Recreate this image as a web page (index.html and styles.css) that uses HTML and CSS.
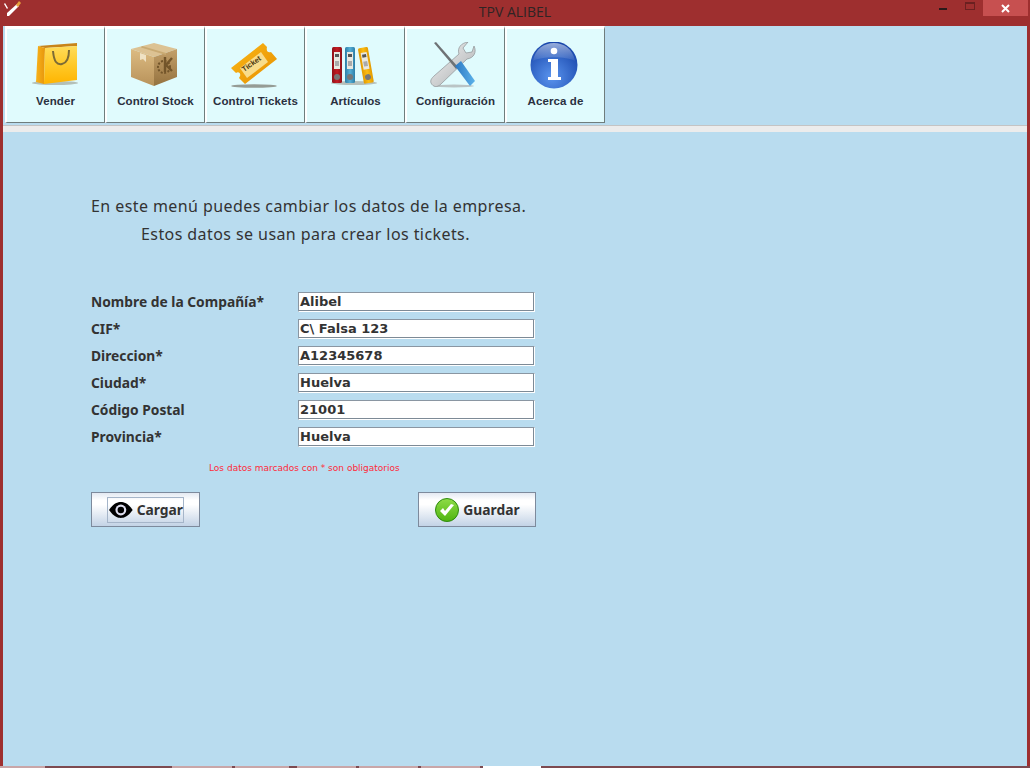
FILE: index.html
```html
<!DOCTYPE html>
<html lang="es">
<head>
<meta charset="utf-8">
<title>TPV ALIBEL</title>
<link rel="stylesheet" href="styles.css">
</head>
<body>
<div class="window">
  <header class="titlebar">
    <svg class="app-icon" width="18" height="18" viewBox="0 0 18 18">
      <path d="M2 3 L5 8 L4 9 L1 4 Z" fill="#fff"/>
      <path d="M4 13 L14 4 L16 6 L6 16 L4 16 Z" fill="#fff"/>
      <path d="M13 5 L16 1 L18 3 L15 7 Z" fill="#e8a33c"/>
    </svg>
    <div class="title">TPV ALIBEL</div>
    <div class="controls">
      <span class="ctl-min"></span>
      <span class="ctl-max"></span>
      <span class="ctl-close">
        <svg width="9" height="9" viewBox="0 0 9 9"><path d="M1 1 L8 8 M8 1 L1 8" stroke="#fff" stroke-width="2"/></svg>
      </span>
    </div>
  </header>
  <main class="frame">
    <nav class="toolbar">
      <button class="tool">
        <svg class="tool-icon" width="48" height="48" viewBox="0 0 48 48">
          <defs>
            <linearGradient id="bagF" x1="0" y1="0" x2="0" y2="1"><stop offset="0" stop-color="#ffdc5a"/><stop offset=".5" stop-color="#ffc928"/><stop offset="1" stop-color="#ffb400"/></linearGradient>
            <linearGradient id="bagS" x1="0" y1="0" x2="1" y2="0"><stop offset="0" stop-color="#f7b21a"/><stop offset="1" stop-color="#e8960c"/></linearGradient>
          </defs>
          <ellipse cx="25" cy="41" rx="23" ry="2" fill="#8f8f80" opacity=".55"/>
          <path d="M8 4 L47 1 L47 4 L15 6 Z" fill="#c8841a"/>
          <path d="M8 4 L15 6 L14 42 L6 40 Z" fill="url(#bagS)"/>
          <path d="M15 6 L47 4 L47 38 L14 42 Z" fill="url(#bagF)"/>
          <path d="M23 9 C24 20 27 23 32 22 C37 21 39 15 39 8" fill="none" stroke="#7d6b35" stroke-width="2"/>
        </svg>
        <span class="tool-label">Vender</span>
      </button>
      <button class="tool">
        <svg class="tool-icon" width="48" height="48" viewBox="0 0 48 48">
          <defs>
            <linearGradient id="boxL" x1="0" y1="0" x2="0" y2="1"><stop offset="0" stop-color="#dcbb82"/><stop offset="1" stop-color="#b8925a"/></linearGradient>
            <linearGradient id="boxR" x1="0" y1="0" x2="0" y2="1"><stop offset="0" stop-color="#c3a06a"/><stop offset="1" stop-color="#95723f"/></linearGradient>
          </defs>
          <path d="M1 7 L24 1 L47 7 L24 15 Z" fill="#dcc293"/>
          <path d="M1 7 L24 15 L24 44 L1 35 Z" fill="url(#boxL)"/>
          <path d="M24 15 L47 7 L47 35 L24 44 Z" fill="url(#boxR)"/>
          <path d="M12 4 L36 11 L36 13 L11 5.500 Z" fill="#c9aa73"/>
          <path d="M10 11 L16 13 L16 20 L13 17 L10 18 Z" fill="#efe2c4"/>
          <circle cx="34" cy="25" r="6" fill="none" stroke="#73552a" stroke-width="2" stroke-dasharray="2 1.5"/>
          <path d="M35 15 L35 30 M42 16 L36 23 L42 29" fill="none" stroke="#73552a" stroke-width="2.400"/>
        </svg>
        <span class="tool-label">Control Stock</span>
      </button>
      <button class="tool">
        <svg class="tool-icon" width="48" height="48" viewBox="0 0 48 48">
          <defs>
            <linearGradient id="tick" x1="0" y1="0" x2="1" y2="1"><stop offset="0" stop-color="#fbb918"/><stop offset="1" stop-color="#e68e00"/></linearGradient>
          </defs>
          <ellipse cx="24" cy="44" rx="23" ry="1.800" fill="#7c7c72" opacity=".75"/>
          <path d="M1 26 L33 1 L37 5 C36 9 38 11 41 10 L47 17 L15 42 L9 36 C12 32 9 29 6 31 Z" fill="url(#tick)"/>
          <path d="M10 26 L31 10 L38 20 L17 36 Z" fill="#f8dc8a"/>
          <text class="ticket-text" x="0" y="0" transform="translate(14 30) rotate(-35)">Ticket</text>
        </svg>
        <span class="tool-label">Control Tickets</span>
      </button>
      <button class="tool">
        <svg class="tool-icon" width="48" height="48" viewBox="0 0 48 48">
          <defs>
            <linearGradient id="b1" x1="0" y1="0" x2="1" y2="0"><stop offset="0" stop-color="#8f1118"/><stop offset=".5" stop-color="#c21c24"/><stop offset="1" stop-color="#8f1118"/></linearGradient>
            <linearGradient id="b2" x1="0" y1="0" x2="1" y2="0"><stop offset="0" stop-color="#2d7ea6"/><stop offset=".5" stop-color="#55aed6"/><stop offset="1" stop-color="#2d7ea6"/></linearGradient>
            <linearGradient id="b3" x1="0" y1="0" x2="1" y2="0"><stop offset="0" stop-color="#e39a00"/><stop offset=".5" stop-color="#fbbc12"/><stop offset="1" stop-color="#e39a00"/></linearGradient>
          </defs>
          <ellipse cx="24" cy="41" rx="23" ry="2" fill="#9a9a90" opacity=".6"/>
          <rect x="2" y="5" width="10" height="36" rx="1.500" fill="url(#b1)"/>
          <rect x="15" y="5" width="10" height="36" rx="1.500" fill="url(#b2)"/>
          <g transform="rotate(-10 39 41)"><rect x="34" y="5" width="10" height="36" rx="1.500" fill="url(#b3)"/>
            <rect x="36" y="10" width="6" height="17" fill="#e8e8e0"/><rect x="37" y="12" width="4" height="3" fill="#555"/><rect x="37" y="19" width="4" height="5" fill="#aaa"/><circle cx="39" cy="35" r="3" fill="#777"/></g>
          <rect x="4" y="10" width="6" height="17" fill="#e8e8e0"/><rect x="5" y="12" width="4" height="3" fill="#555"/><rect x="5" y="19" width="4" height="5" fill="#aaa"/><circle cx="7" cy="35" r="3" fill="#777"/>
          <rect x="17" y="10" width="6" height="17" fill="#e8e8e0"/><rect x="18" y="12" width="4" height="3" fill="#555"/><rect x="18" y="19" width="4" height="5" fill="#aaa"/><circle cx="20" cy="35" r="3" fill="#777"/>
        </svg>
        <span class="tool-label">Artículos</span>
      </button>
      <button class="tool">
        <svg class="tool-icon" width="48" height="48" viewBox="0 0 48 48">
          <defs>
            <linearGradient id="steel" x1="0" y1="0" x2="1" y2="1"><stop offset="0" stop-color="#f6f6f6"/><stop offset="1" stop-color="#a9acae"/></linearGradient>
            <linearGradient id="blue" x1="0" y1="0" x2="1" y2="0"><stop offset="0" stop-color="#2b78c2"/><stop offset="1" stop-color="#5cb2ea"/></linearGradient>
          </defs>
          <ellipse cx="24" cy="44" rx="20" ry="1.500" fill="#a0a0a0" opacity=".6"/>
          <path d="M1 41 C0 38 2 36 4 34 L29 12 C27 6 31 1 38 0 L33 6 L36 11 L42 10 L44 4 C47 10 44 16 37 17 L11 42 C7 46 3 45 1 41 Z" fill="url(#steel)" stroke="#8d9194" stroke-width=".7"/>
          <path d="M4 1 L6 0 L28 25 L26 27 Z" fill="#6e7275"/>
          <path d="M25 24 L31 19 L45 39 L40 44 Z" fill="url(#blue)"/>
        </svg>
        <span class="tool-label">Configuración</span>
      </button>
      <button class="tool">
        <svg class="tool-icon" width="48" height="48" viewBox="0 0 48 48">
          <defs>
            <radialGradient id="info" cx=".45" cy=".75" r=".8"><stop offset="0" stop-color="#5a94ee"/><stop offset="1" stop-color="#123fa5"/></radialGradient>
            <linearGradient id="gloss" x1="0" y1="0" x2="0" y2="1"><stop offset="0" stop-color="#fff" stop-opacity=".55"/><stop offset="1" stop-color="#fff" stop-opacity=".05"/></linearGradient>
          </defs>
          <circle cx="24" cy="23" r="23.500" fill="url(#info)"/>
          <path d="M3 19 C5 7 14 1 24 1 C34 1 43 7 45 19 C36 14 12 14 3 19 Z" fill="url(#gloss)"/>
          <circle cx="24" cy="9" r="3.300" fill="#fff"/>
          <path d="M18 17 L28 17 L28 35 L31 35 L31 38 L18 38 L18 35 L21 35 L21 20 L18 20 Z" fill="#fff"/>
        </svg>
        <span class="tool-label">Acerca de</span>
      </button>
    </nav>
    <div class="divider"></div>
    <section class="content">
      <div class="intro">
        <p class="intro-line">En este menú puedes cambiar los datos de la empresa.</p>
        <p class="intro-line intro-second">Estos datos se usan para crear los tickets.</p>
      </div>
      <form class="form">
        <label class="field-label">Nombre de la Compañía*</label><div class="field">Alibel</div>
        <label class="field-label">CIF*</label><div class="field">C\ Falsa 123</div>
        <label class="field-label">Direccion*</label><div class="field">A12345678</div>
        <label class="field-label">Ciudad*</label><div class="field">Huelva</div>
        <label class="field-label">Código Postal</label><div class="field">21001</div>
        <label class="field-label">Provincia*</label><div class="field">Huelva</div>
      </form>
      <p class="note">Los datos marcados con * son obligatorios</p>
      <div class="actions">
        <button class="action">
          <span class="focus">
            <svg width="24" height="16" viewBox="0 0 24 16">
              <path d="M0 8 C5 1 9 0 12 0 C15 0 19 1 24 8 C19 15 15 16 12 16 C9 16 5 15 0 8 Z" fill="#000"/>
              <circle cx="12" cy="8" r="5.500" fill="#dde"/>
              <circle cx="12" cy="8" r="3.300" fill="#000"/>
            </svg>
            Cargar
          </span>
        </button>
        <button class="action action-save">
          <svg width="24" height="24" viewBox="0 0 24 24">
            <defs><linearGradient id="ok" x1="0" y1="0" x2="0" y2="1"><stop offset="0" stop-color="#8fdc48"/><stop offset="1" stop-color="#4fb40f"/></linearGradient></defs>
            <circle cx="12" cy="12" r="11.500" fill="url(#ok)" stroke="#2f8a10"/>
            <path d="M5 13 L10 18 L19 7 L16 6 L10 13 L8 10 Z" fill="#fff"/>
          </svg>
          Guardar
        </button>
      </div>
    </section>
  </main>
  <footer class="taskstrip">
    <span class="seg s1"></span><span class="seg s2"></span><span class="seg s3"></span><span class="seg s4"></span><span class="seg s5"></span><span class="seg s6"></span><span class="seg s7"></span>
  </footer>
</div>
</body>
</html>
```
FILE: styles.css
```css
* { box-sizing: border-box; }
html, body { margin: 0; padding: 0; }
body { width: 1030px; height: 768px; overflow: hidden; font-family: "Liberation Sans", Arial, sans-serif; }
p { margin: 0; }

.window { width: 1030px; height: 768px; display: flex; flex-direction: column; background: #9e2f2f; }

.titlebar { height: 26px; flex: none; display: flex; align-items: flex-start; background: #9e2f2f; position: relative; }
.app-icon { margin: 0 0 0 3px; }
.title { position: absolute; left: 0; right: 0; top: 2px; text-align: center; font: 14px "Open Sans", sans-serif; color: #2e2424; }
.controls { margin-left: auto; display: flex; align-items: flex-start; padding-right: 2px; }
.ctl-min { width: 8px; height: 2px; background: #2a1a1a; margin: 8px 18px 0 0; }
.ctl-max { width: 10px; height: 8px; border: 1px solid #6b2020; border-top-width: 2px; margin: 2px 8px 0 0; }
.ctl-close { width: 45px; height: 16px; background: #c75050; display: flex; align-items: center; justify-content: center; }

.frame { flex: 1; margin: 0 3px; background: #b9dcef; display: flex; flex-direction: column; min-height: 0; }

.toolbar { height: 99px; flex: none; display: flex; padding: 0 0 2px 2px; }
.tool { width: 100px; height: 97px; padding: 13px 0 0; margin: 0; border: 0; border-top: 3px solid #fff; border-left: 2px solid #fff; border-right: 1px solid #6f7d7d; border-bottom: 1px solid #6f7d7d; background: #e0fbfd; display: flex; flex-direction: column; align-items: center; }
.tool-icon { flex: none; display: block; margin-left: -3px; }
.tool-label { margin-top: 5px; font: bold 11.5px "Liberation Sans", Arial, sans-serif; letter-spacing: .1px; color: #2a3040; white-space: nowrap; }
.ticket-text { font: bold 7.500px "Liberation Sans", Arial, sans-serif; fill: #4d3a10; }

.divider { height: 7px; flex: none; background: #ececec; border-top: 1px solid #c4c4c4; }

.content { flex: 1; padding: 60px 0 0 88px; background: #b9dcef; color: #333; }
.intro { font: 16px/28px "Noto Sans", sans-serif; letter-spacing: .42px; color: #333; height: 100px; }
.intro-second { padding-left: 50px; }

.form { display: grid; grid-template-columns: 207px 237px; grid-auto-rows: 20px; row-gap: 7px; align-items: center; }
.field-label { font: bold 13.8px "Noto Sans", sans-serif; color: #333; white-space: nowrap; margin-top: -2px; }
.field { height: 20px; background: #fff; border: 1px solid; border-color: #8a96a2 #fff #fff #8a96a2; box-shadow: inset -1px -1px 0 #7d8a96; padding: 0 1px; font: bold 13px/18px "DejaVu Sans", sans-serif; color: #333; }

.note { margin: 14px 0 0 118px; font: 9px "DejaVu Sans", sans-serif; color: #ff2a3a; height: 14px; line-height: 14px; }

.actions { margin-top: 17px; width: 445px; display: flex; justify-content: space-between; }
.action { height: 35px; width: 109px; border: 1px solid #7d8a9c; background: linear-gradient(#e3e9f2 0, #fff 22%, #fff 35%, #c3d3e6 100%); display: flex; align-items: center; justify-content: center; padding: 0; font: bold 13.8px "Noto Sans", sans-serif; color: #333; gap: 4px; }
.action-save { width: 118px; }
.action-save svg { margin-left: 1px; }
.focus { display: flex; align-items: center; gap: 4px; width: 77px; height: 26px; padding: 0 0 0 1px; border: 1px solid #a5b5c9; white-space: nowrap; }

.taskstrip { height: 2px; flex: none; background: #7d4a50; display: flex; }
.seg { height: 2px; background: #c9a6a8; }
.s1 { width: 45px; }
.s2 { width: 60px; margin-left: 127px; }
.s3 { width: 54px; margin-left: 3px; }
.s4 { width: 59px; margin-left: 8px; }
.s5 { width: 59px; margin-left: 3px; }
.s6 { width: 59px; margin-left: 3px; }
.s7 { width: 58px; margin-left: 3px; background: #fff; }
```
